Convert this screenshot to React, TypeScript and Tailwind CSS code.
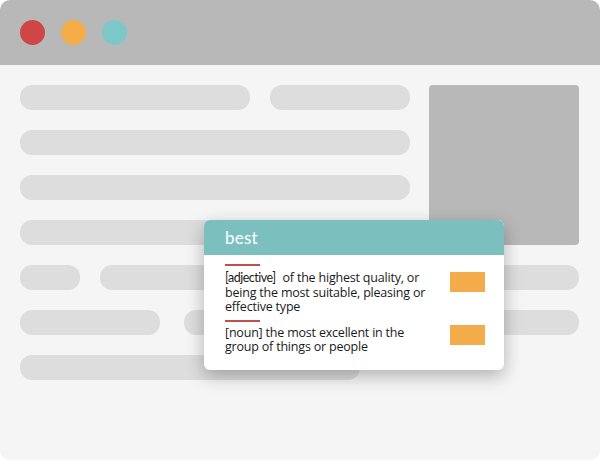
import React from 'react';

const Bar = ({ w }: { w: string }) => <div className={`h-[25px] rounded-[12px] bg-[#dddddd] ${w}`} />;

export default function App() {
  return (
    <div className="w-[600px] h-[470px] bg-white">
      <div className="relative w-[600px] h-[460px] rounded-[10px] overflow-hidden bg-[#f5f5f5]">
        {/* Title bar */}
        <div className="h-[65px] bg-[#b8b8b8] flex items-center gap-4 pl-5">
          <span className="w-[25px] h-[25px] rounded-full bg-[#d04545]" />
          <span className="w-[25px] h-[25px] rounded-full bg-[#f5ad4a]" />
          <span className="w-[25px] h-[25px] rounded-full bg-[#7cc7c7]" />
        </div>

        {/* Page skeleton */}
        <div className="px-5 pt-5 flex flex-col gap-5">
          <div className="flex gap-[19px]">
            <div className="w-[390px] flex flex-col gap-5">
              <div className="flex gap-5">
                <Bar w="w-[230px]" />
                <Bar w="w-[140px]" />
              </div>
              <Bar w="w-[390px]" />
              <Bar w="w-[390px]" />
              <Bar w="w-[390px]" />
            </div>
            <div className="w-[150px] h-[160px] rounded-[4px] bg-[#b8b8b8]" />
          </div>
          <div className="flex gap-5">
            <Bar w="w-[60px]" />
            <Bar w="w-[479px]" />
          </div>
          <div className="flex gap-6">
            <Bar w="w-[140px]" />
            <Bar w="w-[395px]" />
          </div>
          <Bar w="w-[340px]" />
        </div>

        {/* Definition popup */}
        <div className="absolute left-[204px] top-[220px] w-[300px] h-[150px] rounded-[6px] overflow-hidden bg-white shadow-[0_6px_18px_rgba(0,0,0,0.28)]">
          <div className="h-[35px] bg-[#7bbfbf] px-[21px] flex items-center">
            <span className="text-white text-[17px] font-['Lato',sans-serif] tracking-[0.2px]">best</span>
          </div>
          <div className="pl-[21px] pr-[19px] pt-[9px] font-['Open_Sans',sans-serif] text-[12.5px] leading-[14.5px] tracking-[-0.2px] text-[#1a1a1a]">
            <div className="flex justify-between">
              <div className="w-[210px]">
                <div className="w-[35px] h-[2px] bg-[#c0504d] mb-[5px]" />
                <p>
                  <span className="inline-block mr-[7px] font-['Lato',sans-serif] tracking-[-0.5px]">[adjective]</span>of the highest quality, or being the most suitable, pleasing or effective type
                </p>
              </div>
              <div className="w-[35px] h-[20px] bg-[#f4ab4a] mt-[8px]" />
            </div>
            <div className="flex justify-between mt-[5px]">
              <div className="w-[210px]">
                <div className="w-[35px] h-[2px] bg-[#c0504d] mb-[4px]" />
                <p>[noun] the most excellent in the group of things or people</p>
              </div>
              <div className="w-[35px] h-[20px] bg-[#f4ab4a] mt-[5px]" />
            </div>
          </div>
        </div>
      </div>
    </div>
  );
}
